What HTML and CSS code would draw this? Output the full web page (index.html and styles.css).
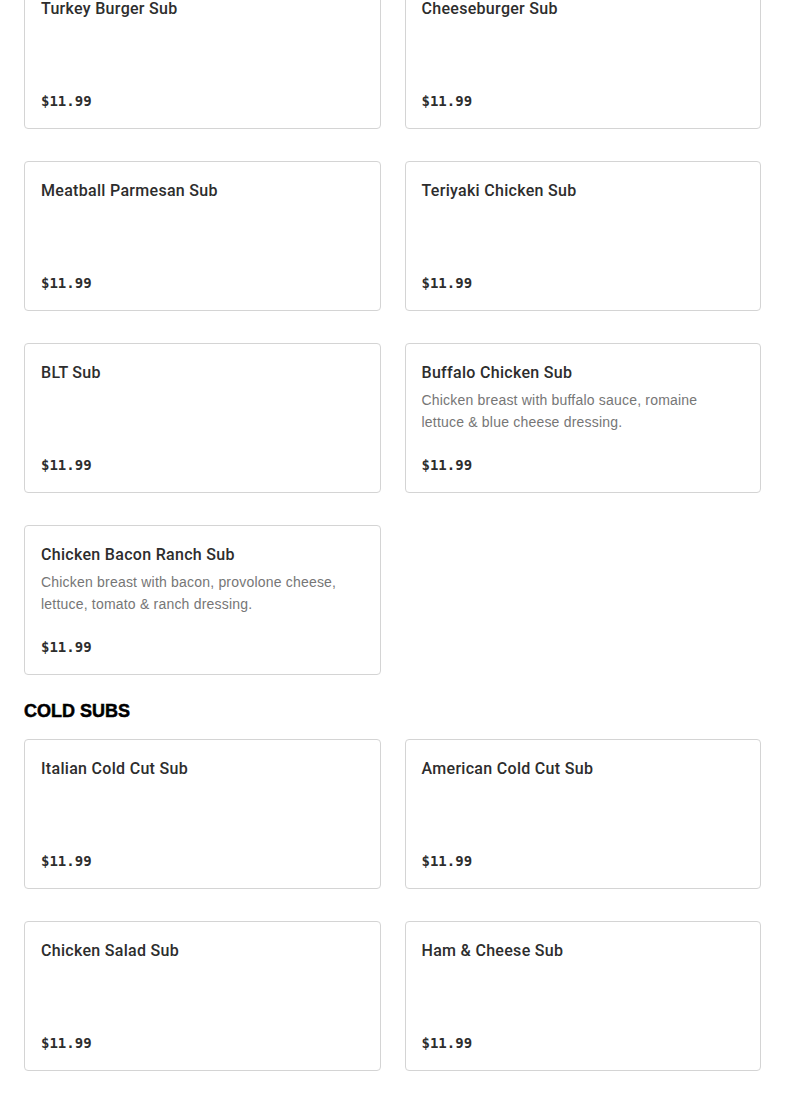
FILE: index.html
```html
<!DOCTYPE html>
<html lang="en">
<head>
    <meta charset="UTF-8">
    <meta name="viewport" content="width=device-width, initial-scale=1.0">
    <title>Menu - Subs</title>
    <link rel="stylesheet" href="styles.css">
</head>
<body>
    <main class="menu">
        <section class="menu-section">
            <div class="item-grid">
                <div class="item-card">
                    <h3 class="item-name">Turkey Burger Sub</h3>
                    <span class="item-price">$11.99</span>
                </div>
                <div class="item-card">
                    <h3 class="item-name">Cheeseburger Sub</h3>
                    <span class="item-price">$11.99</span>
                </div>
                <div class="item-card">
                    <h3 class="item-name">Meatball Parmesan Sub</h3>
                    <span class="item-price">$11.99</span>
                </div>
                <div class="item-card">
                    <h3 class="item-name">Teriyaki Chicken Sub</h3>
                    <span class="item-price">$11.99</span>
                </div>
                <div class="item-card">
                    <h3 class="item-name">BLT Sub</h3>
                    <span class="item-price">$11.99</span>
                </div>
                <div class="item-card">
                    <h3 class="item-name">Buffalo Chicken Sub</h3>
                    <p class="item-desc">Chicken breast with buffalo sauce, romaine lettuce &amp; blue cheese dressing.</p>
                    <span class="item-price">$11.99</span>
                </div>
                <div class="item-card">
                    <h3 class="item-name">Chicken Bacon Ranch Sub</h3>
                    <p class="item-desc">Chicken breast with bacon, provolone cheese, lettuce, tomato &amp; ranch dressing.</p>
                    <span class="item-price">$11.99</span>
                </div>
            </div>
        </section>

        <section class="menu-section">
            <h2 class="section-title">COLD SUBS</h2>
            <div class="item-grid">
                <div class="item-card">
                    <h3 class="item-name">Italian Cold Cut Sub</h3>
                    <span class="item-price">$11.99</span>
                </div>
                <div class="item-card">
                    <h3 class="item-name">American Cold Cut Sub</h3>
                    <span class="item-price">$11.99</span>
                </div>
                <div class="item-card">
                    <h3 class="item-name">Chicken Salad Sub</h3>
                    <span class="item-price">$11.99</span>
                </div>
                <div class="item-card">
                    <h3 class="item-name">Ham &amp; Cheese Sub</h3>
                    <span class="item-price">$11.99</span>
                </div>
            </div>
        </section>
    </main>
</body>
</html>
```

FILE: styles.css
```css
body {
    font-family: "Liberation Sans", Arial, sans-serif;
    margin: 0;
    padding: 0;
    background-color: #fff;
    color: #2d2d2d;
}
.menu {
    padding: 0 24px 30px;
    margin-top: -21px;
}
.section-title {
    font-size: 18px;
    font-weight: 900;
    line-height: 24px;
    color: #000;
    -webkit-text-stroke: 0.5px #000;
    margin: 24px 0 16px;
}
.item-grid {
    display: grid;
    grid-template-columns: 1fr 1fr;
    column-gap: 24px;
    row-gap: 32px;
}
.item-card {
    display: flex;
    flex-direction: column;
    height: 150px;
    box-sizing: border-box;
    padding: 17px 16px 15px;
    border: 1px solid #d4d4d4;
    border-radius: 4px;
    background-color: #fff;
}
.item-name {
    margin: 0;
    font-family: Roboto, "Liberation Sans", sans-serif;
    font-size: 16px;
    font-weight: 500;
    line-height: 24px;
    letter-spacing: 0.3px;
    color: #2d2d2d;
}
.item-desc {
    margin: 4px 0 0;
    padding-right: 8px;
    font-size: 14px;
    line-height: 22px;
    letter-spacing: 0.2px;
    color: #767676;
}
.item-price {
    margin-top: auto;
    font-family: "DejaVu Sans Mono", "Liberation Mono", monospace;
    font-size: 14px;
    font-weight: bold;
    line-height: 24px;
    color: #2d2d2d;
}
```
